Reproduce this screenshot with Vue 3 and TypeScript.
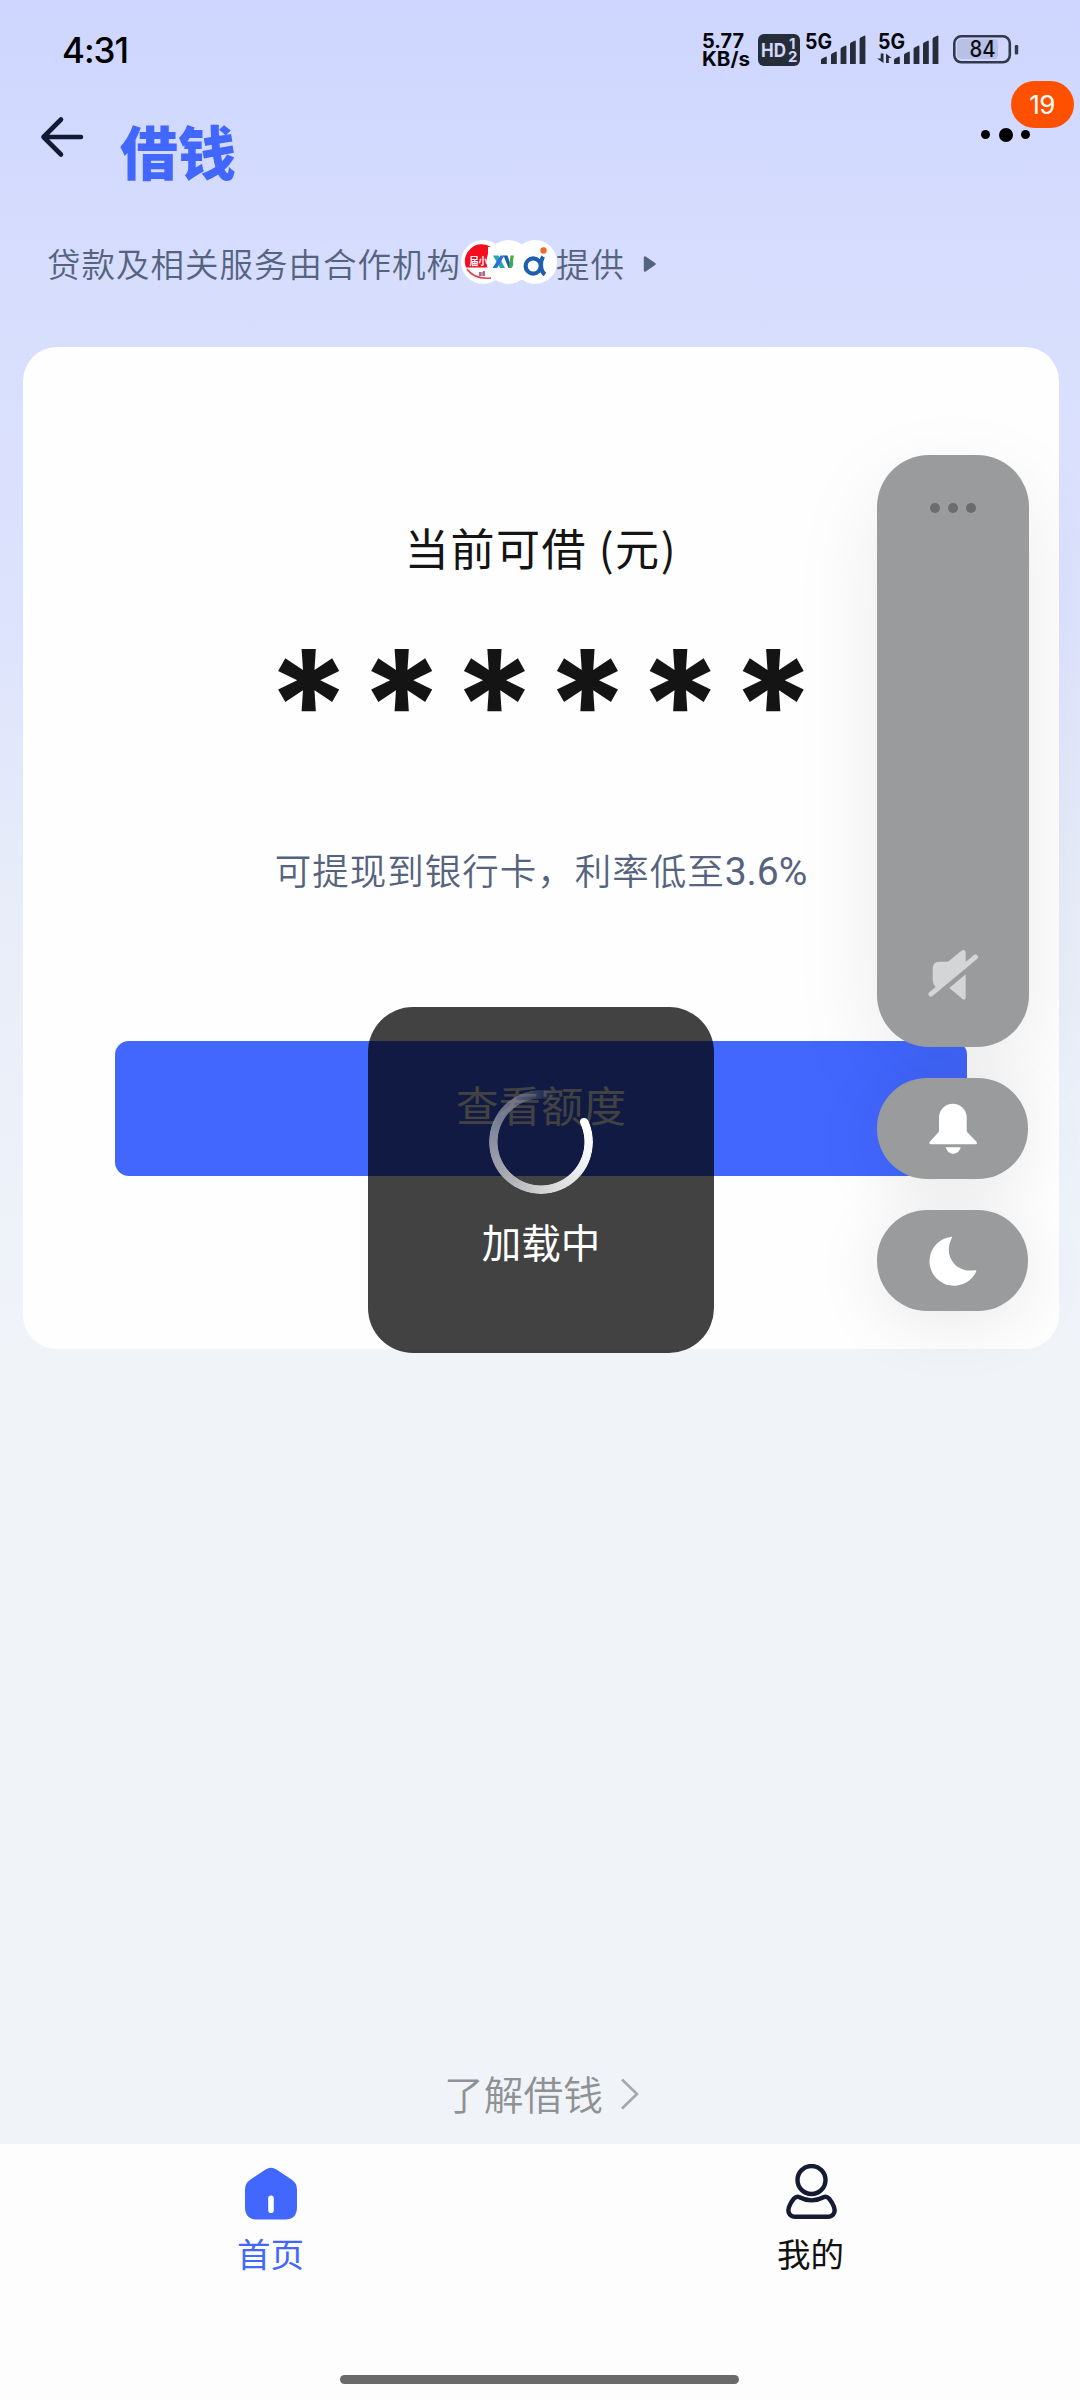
<script setup lang="ts">
interface Tab {
  key: string
  label: string
  active: boolean
}

const status = { time: '4:31', rate: '5.77', unit: 'KB/s', battery: '84' }
const badge = 19
const masked = Array.from({ length: 6 }, () => '*')
const tabs: Tab[] = [
  { key: 'home', label: '首页', active: true },
  { key: 'mine', label: '我的', active: false },
]
const bars = [
  { x: 0, h: 7 },
  { x: 10, h: 12 },
  { x: 19.6, h: 18 },
  { x: 29, h: 23 },
  { x: 38.6, h: 28 },
]
</script>

<template>
  <div class="screen">
    <header class="status">
      <span class="time">{{ status.time }}</span>
      <svg class="indicators" width="322" height="40" viewBox="700 30 322 40">
        <g font-family="Inter, sans-serif" font-weight="700" fill="#05070c">
          <text x="702" y="48" font-size="20" textLength="42" lengthAdjust="spacingAndGlyphs">{{ status.rate }}</text>
          <text x="702" y="66" font-size="19.5" textLength="48" lengthAdjust="spacingAndGlyphs">{{ status.unit }}</text>
          <text x="805" y="48.500" font-size="21" textLength="27" lengthAdjust="spacingAndGlyphs">5G</text>
          <text x="878" y="48.500" font-size="21" textLength="27" lengthAdjust="spacingAndGlyphs">5G</text>
        </g>
        <rect x="758" y="34" width="42" height="32" rx="6" fill="#272c39" />
        <g font-family="Inter, sans-serif" font-weight="700" fill="#d0d8fc">
          <text x="761" y="57" font-size="18.5" textLength="25" lengthAdjust="spacingAndGlyphs">HD</text>
          <text x="789" y="49" font-size="15">1</text>
          <text x="788" y="62" font-size="15">2</text>
        </g>
        <g fill="#272c39">
          <path
            v-for="b in bars"
            :key="'a' + b.x"
            :d="`M${821 + b.x} 64v${-b.h + 3}q0 -1 1 -1.5l3.6 -1.8q1.2 -.4 1.2 .8v${b.h - 0.5}z`"
          />
          <path
            v-for="b in bars"
            :key="'b' + b.x"
            :d="`M${894 + b.x} 64v${-b.h + 3}q0 -1 1 -1.5l3.6 -1.8q1.2 -.4 1.2 .8v${b.h - 0.5}z`"
          />
          <path d="M883.500 53.500v9.500l-6.500 -4.500h3.700v-5zM886 63v-9.500l5.500 4.500h-2.700v5z" />
        </g>
        <rect x="957" y="39" width="41" height="20" rx="4" fill="#b9c0e6" />
        <rect x="954.300" y="36.300" width="55.500" height="26" rx="7" fill="none" stroke="#333949" stroke-width="2.600" />
        <rect x="1014.800" y="45" width="3.400" height="9.500" rx="1.200" fill="#333949" />
        <text x="969.500" y="57" font-family="Inter, sans-serif" font-weight="500" font-size="22.500" textLength="26" lengthAdjust="spacingAndGlyphs" fill="#0b0d14">{{ status.battery }}</text>
      </svg>
    </header>

    <nav class="navbar">
      <svg class="back" width="46" height="44" viewBox="0 0 46 44">
        <path d="M22 4.500L4.500 22L22 39.500M4.500 22H42" fill="none" stroke="#121b33" stroke-width="4.600" stroke-linecap="round" stroke-linejoin="round" />
      </svg>
      <h1 class="title">借钱</h1>
      <div class="more">
        <i class="dot"></i><i class="dot big"></i><i class="dot"></i>
        <span class="badge">{{ badge }}</span>
      </div>
    </nav>

    <div class="partners">
      <span>贷款及相关服务由合作机构</span>
      <svg class="logos" width="98" height="46" viewBox="460 239 98 46">
        <circle cx="483" cy="262" r="22" fill="#fff" />
        <path d="M491 247A17 17 0 0 0 466 267.500H488V247z" fill="#f20d1f" />
        <path d="M467 269Q474 279.500 491 278" fill="none" stroke="#e2434c" stroke-width="1.600" />
        <text x="469.500" y="264.500" font-family="Noto Sans CJK SC, sans-serif" font-weight="700" font-size="10" textLength="18" lengthAdjust="spacingAndGlyphs" fill="#fff">届小</text>
        <path d="M480 272v4M484 271v5" stroke="#e2434c" stroke-width="1.800" />
        <path d="M482 272v4" stroke="#4c8fe0" stroke-width="1.500" />
        <circle cx="508.500" cy="262" r="22" fill="#fff" />
        <path d="M493 255.500h5.500l6.500 12.500h-5z" fill="#28a9a9" />
        <path d="M504.500 255.500h-4l-8 12.500h4.500z" fill="#2c6fd6" />
        <path d="M503.500 255.500h4l4 12.500h-3z" fill="#1d5fae" />
        <path d="M510.500 255.500h4v8l-3 4.500h-2.500z" fill="#3fae49" />
        <circle cx="535" cy="262" r="22" fill="#fff" />
        <circle cx="533.200" cy="266" r="7.600" fill="none" stroke="#1f5fae" stroke-width="4.200" />
        <path d="M543 256.500C540 262 540 271 545 274.500" fill="none" stroke="#1f5fae" stroke-width="4.200" />
        <circle cx="543.500" cy="250.500" r="3.200" fill="#f06a25" />
      </svg>
      <span>提供</span>
      <svg class="caret" width="14" height="18" viewBox="0 0 14 18">
        <path d="M2 2.500v13l9.500 -6.500z" fill="#56637f" stroke="#56637f" stroke-width="2.400" stroke-linejoin="round" />
      </svg>
    </div>

    <main class="card">
      <p class="caption">当前可借 (元)</p>
      <div class="amount">
        <span v-for="(m, i) in masked" :key="i">{{ m }}</span>
      </div>
      <p class="note">可提现到银行卡，利率低至<b>3.6%</b></p>
      <button class="cta">查看额度</button>
    </main>

    <a class="learn">
      <span>了解借钱</span>
      <svg width="20" height="34" viewBox="0 0 20 34">
        <path d="M2 2.500L17 17L2 31.500" fill="none" stroke="#a6a8ab" stroke-width="2.600" />
      </svg>
    </a>

    <footer class="tabbar">
      <div v-for="t in tabs" :key="t.key" class="tab" :class="{ active: t.active }">
        <svg v-if="t.key === 'home'" width="60" height="60" viewBox="0 0 60 60">
          <path d="M24.500 5.500Q30 2.200 35.500 5.500L50.500 15.500Q56 19 56 25.500V43Q56 55.500 44 55.500H16Q4 55.500 4 43V25.500Q4 19 9.500 15.500z" fill="#4267ff" />
          <rect x="27.200" y="31.500" width="5.600" height="17.500" rx="2.800" fill="#fff" />
        </svg>
        <svg v-else width="60" height="60" viewBox="0 0 60 60">
          <g fill="none" stroke="#141b33" stroke-width="4.400" stroke-linejoin="round">
            <circle cx="30.500" cy="16" r="14" />
            <path d="M18.500 33.200Q30.500 39.500 42.500 33.200Q45.500 31.800 48 34.500Q51.500 38.500 53 43Q55 49 50.500 51.800Q49 52.800 46 52.800H15Q12 52.800 10.500 51.800Q6 49 8 43Q9.500 38.500 13 34.500Q15.500 31.800 18.500 33.200z" />
          </g>
        </svg>
        <span>{{ t.label }}</span>
      </div>
    </footer>
    <i class="handle"></i>

    <div class="toast">
      <div class="spinner"><i></i></div>
      <span>加载中</span>
    </div>

    <aside class="volume">
      <div class="slider">
        <div class="dots"><i></i><i></i><i></i></div>
        <svg width="52" height="52" viewBox="0 0 52 52">
          <g fill="#d4d5d6">
            <path d="M5.700 19Q5.700 11.700 12 11.700H19Q21 11.700 22.500 10.500L34.500 .8Q38.700 -1.500 38.700 3V15L12 37.500H9Q5.700 34 5.700 30z" />
            <path d="M38.700 24.300V47Q38.700 51 35.500 49L22.300 37.900z" />
            <path d="M3.900 44.200L48.500 7" stroke="#d4d5d6" stroke-width="5" stroke-linecap="round" />
          </g>
        </svg>
      </div>
      <div class="pill">
        <svg width="52" height="52" viewBox="0 0 52 52">
          <g fill="#fff">
            <path d="M12 14.600A13.850 13.850 0 0 1 39.700 14.600V27.500Q39.700 29 41 30L49.300 38.500Q51 41.200 48.300 41.200H4Q1.300 41.200 3 38.500L10.800 30Q12 29 12 27.500z" />
            <path d="M18.700 44.300H33.700C31.500 53 21 53 18.700 44.300z" />
          </g>
        </svg>
      </div>
      <div class="pill">
        <svg width="52" height="52" viewBox="0 0 52 52">
          <path d="M24 1.900C25.200 1.700 25.200 2.300 24.700 3.200C19.800 13 21.500 22.500 27 28.500C32 34.500 40 36.500 47.500 35.200C49.500 35 49.500 35.800 49 37A24.500 24.500 0 1 1 24 1.900z" fill="#fff" />
        </svg>
      </div>
    </aside>
  </div>
</template>

<style>
html,
body {
  margin: 0;
  background: #f0f4f9;
}
</style>

<style scoped>
.screen {
  position: relative;
  box-sizing: border-box;
  width: 1080px;
  height: 2400px;
  overflow: hidden;
  display: flex;
  flex-direction: column;
  font-family: 'Noto Sans CJK SC', sans-serif;
  background: linear-gradient(180deg, #ced6ff 0, #d8dffd 340px, #dde3fc 620px, #e7ecf9 880px, #f0f4f9 1340px, #f0f4f9 100%);
}
.status {
  display: flex;
  justify-content: space-between;
  height: 70px;
  padding: 30px 58px 0 62px;
  box-sizing: border-box;
}
.time {
  font-family: Inter, sans-serif;
  font-weight: 500;
  font-size: 35px;
  line-height: 40px;
  letter-spacing: -1px;
  color: #000;
}
.navbar {
  display: flex;
  align-items: flex-start;
  height: 160px;
  padding: 45px 50px 0 39px;
  box-sizing: border-box;
}
.title {
  margin: -1px 0 0 35px;
  font-size: 58px;
  line-height: 72px;
  font-weight: 900;
  color: #4267ff;
}
.more {
  position: relative;
  display: flex;
  align-items: center;
  gap: 8.500px;
  height: 14px;
  margin: 12.500px 0 0 auto;
}
.dot {
  width: 9px;
  height: 9px;
  border-radius: 50%;
  background: #000;
}
.dot.big {
  width: 14px;
  height: 14px;
}
.badge {
  position: absolute;
  left: 29.500px;
  top: -46.500px;
  width: 63px;
  height: 47px;
  border-radius: 24px;
  background: #ff5000;
  color: #fff;
  font: 400 26px/47px Inter, sans-serif;
  letter-spacing: -0.500px;
  text-align: center;
}
.partners {
  display: flex;
  align-items: center;
  height: 66px;
  margin-bottom: 51px;
  padding-left: 47px;
  font-size: 33.500px;
  letter-spacing: 1px;
  line-height: 66px;
  font-weight: 350;
  color: #56637f;
}
.partners .logos {
  margin: -3px -2px 0 -1px;
}
.partners .logos text {
  letter-spacing: 0;
}
.caret {
  margin: 2px 0 0 18px;
}
.card {
  display: flex;
  flex-direction: column;
  align-items: center;
  width: 1036px;
  height: 1002px;
  margin-left: 23px;
  border-radius: 34px;
  background: #fefefe;
  flex: none;
}
.card p {
  white-space: nowrap;
}
.caption {
  margin: 164px 0 0;
  font-size: 44px;
  letter-spacing: 1.600px;
  line-height: 72px;
  color: #141414;
}
.amount {
  display: flex;
  height: 120px;
  margin-top: 42px;
  font: 700 152px/160px Inter, sans-serif;
  color: #141414;
}
.amount span {
  width: 92.900px;
  display: flex;
  justify-content: center;
}
.note {
  height: 60px;
  margin: 95px 0 0;
  font-size: 36.500px;
  letter-spacing: 1px;
  line-height: 60px;
  font-weight: 350;
  color: #56637f;
}
.note b {
  font: 400 39px/40px Roboto, sans-serif;
  letter-spacing: 0;
}
.cta {
  width: 852px;
  height: 135px;
  margin-top: 141px;
  padding: 0 0 9px;
  border: 0;
  border-radius: 14px;
  background: #4267ff;
  color: #fff;
  font: 400 42.500px/60px 'Noto Sans CJK SC', sans-serif;
}
.learn {
  display: flex;
  align-items: center;
  justify-content: center;
  gap: 17px;
  margin-top: auto;
  height: 100px;
  padding-left: 4px;
  font-size: 39.800px;
  font-weight: 350;
  color: #8f9194;
}
.learn span {
  margin-top: -3px;
}
.tabbar {
  display: flex;
  height: 256px;
  flex: none;
  background: #fdfdfe;
}
.tab {
  flex: 1;
  display: flex;
  flex-direction: column;
  align-items: center;
  padding: 20px 0 0 1px;
  font-size: 33.500px;
  line-height: 44px;
  color: #111;
}
.tab span {
  margin-top: 7px;
}
.tab.active {
  color: #4267ff;
}
.handle {
  position: absolute;
  left: 340px;
  bottom: 16px;
  width: 399px;
  height: 9px;
  border-radius: 5px;
  background: #6a6a6b;
}
.toast {
  position: absolute;
  left: 368px;
  top: 1007px;
  width: 346px;
  height: 346px;
  border-radius: 45px;
  background: rgba(0, 0, 0, 0.74);
  display: flex;
  flex-direction: column;
  align-items: center;
  color: #fff;
  font-size: 39.500px;
  line-height: 60px;
}
.spinner {
  position: relative;
  width: 104px;
  height: 104px;
  margin: 83px 0 17px;
  border-radius: 50%;
  background: conic-gradient(from 65deg, #fff 0, #f0f2f6 50deg, #d2d2d2 115deg, #a3a5ac 170deg, #858b9e 215deg, rgba(150, 155, 175, 0.6) 260deg, rgba(150, 155, 175, 0.25) 290deg, rgba(150, 155, 175, 0) 315deg);
  -webkit-mask: radial-gradient(circle, transparent 43px, #000 43.800px);
  mask: radial-gradient(circle, transparent 43px, #000 43.800px);
}
.spinner i {
  position: absolute;
  left: 90.600px;
  top: 27.500px;
  width: 8.600px;
  height: 8.600px;
  border-radius: 50%;
  background: #fff;
}
.volume {
  position: absolute;
  z-index: 1;
  left: 877px;
  top: 455px;
  width: 152px;
  display: flex;
  flex-direction: column;
  gap: 31px;
}
.slider,
.pill {
  display: flex;
  flex-direction: column;
  align-items: center;
  box-sizing: border-box;
  background: #9a9b9c;
}
.slider {
  height: 592px;
  padding: 48px 0 45px;
  justify-content: space-between;
  border-radius: 52px;
  box-shadow: 0 30px 90px rgba(0, 0, 0, 0.08);
}
.pill {
  position: relative;
  width: 151px;
  height: 101px;
  justify-content: center;
  border-radius: 50px;
}
.pill::before {
  content: '';
  position: absolute;
  inset: 0;
  border-radius: 50px;
  box-shadow: 0 10px 70px rgba(0, 0, 0, 0.09);
  z-index: -1;
}
.dots {
  display: flex;
  gap: 8.400px;
}
.dots i {
  width: 10px;
  height: 10px;
  border-radius: 50%;
  background: #6b6c6d;
}
</style>
